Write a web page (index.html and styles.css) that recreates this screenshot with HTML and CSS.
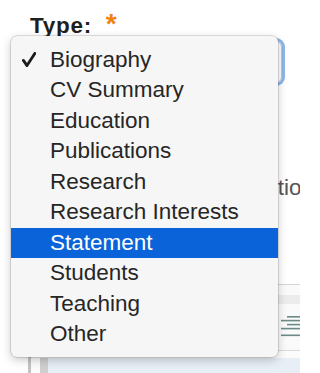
FILE: index.html
```html
<!DOCTYPE html>
<html>
<head>
<meta charset="utf-8">
<link rel="stylesheet" href="styles.css">
</head>
<body>
<div class="page">
  <div class="label">Type: <span class="req">*</span></div>
  <div class="select"></div>
  <div class="help"><span class="help-text">tion</span></div>
  <div class="editor">
    <div class="toolbar-band"></div>
    <div class="icon-row">
      <svg class="justify" width="22" height="22" viewBox="0 0 22 22">
        <rect x="7" y="1" width="15" height="1.6" fill="#6b8a88"/>
        <rect x="1" y="4.8" width="21" height="1.6" fill="#6b8a88"/>
        <rect x="7" y="8.8" width="15" height="1.6" fill="#6b8a88"/>
        <rect x="1" y="12.8" width="21" height="1.6" fill="#6b8a88"/>
        <rect x="1" y="19.5" width="21" height="1.6" fill="#6b8a88"/>
      </svg>
    </div>
    <div class="editor-foot">
      <div class="foot-bar"></div>
      <div class="foot-fill"></div>
    </div>
  </div>

  <div class="menu">
    <div class="item"><span class="check"><svg width="14" height="15" viewBox="0 0 14 15"><path d="M1.4 8.4 L5 13.6 L12.8 1.4" fill="none" stroke="#1a1a1a" stroke-width="2.8" stroke-linejoin="round" stroke-linecap="round"/></svg></span>Biography</div>
    <div class="item"><span class="check"></span>CV Summary</div>
    <div class="item"><span class="check"></span>Education</div>
    <div class="item"><span class="check"></span>Publications</div>
    <div class="item"><span class="check"></span>Research</div>
    <div class="item"><span class="check"></span>Research Interests</div>
    <div class="item selected"><span class="check"></span>Statement</div>
    <div class="item"><span class="check"></span>Students</div>
    <div class="item"><span class="check"></span>Teaching</div>
    <div class="item"><span class="check"></span>Other</div>
  </div>
</div>
</body>
</html>
```

FILE: styles.css
```css
html, body {
  margin: 0;
  padding: 0;
  background: #ffffff;
  overflow: hidden;
}
body {
  width: 300px;
  height: 373px;
  font-family: "Liberation Sans", Arial, sans-serif;
}
.page {
  position: relative;
  width: 300px;
  height: 373px;
  overflow: hidden;
}
.label {
  padding: 11px 0 0 30px;
  height: 26px;
  font-weight: bold;
  font-size: 22.5px;
  letter-spacing: 0.7px;
  line-height: 26px;
  color: #1f1f1f;
}
.req {
  color: #f0820f;
  margin-left: 7px;
  font-size: 28px;
}
.select {
  margin: 4px 0 0 26px;
  width: 254px;
  height: 40px;
  border-radius: 6px;
  border: 1px solid #b8c8dc;
  box-shadow: 0 0 0 3px #8fb6ea;
}
.help {
  margin-top: 91px;
  width: 300px;
  overflow: hidden;
  display: flex;
  justify-content: flex-end;
  white-space: nowrap;
  font-size: 22.5px;
  line-height: 28px;
  color: #555555;
}
.help-text {
  flex: none;
  margin-right: -14px;
}
.editor {
  margin: 82px 0 0 28px;
  border-left: 3px solid #c4c4c4;
  border-top: 1px solid #d6d6d6;
  height: 100px;
  background: #fafafa;
}
.toolbar-band {
  margin-top: 10px;
  height: 9px;
  background: #ececec;
}
.icon-row {
  display: flex;
  justify-content: flex-end;
  padding-top: 11px;
  height: 26px;
}
.justify {
  margin-right: -2px;
}
.editor-foot {
  border-top: 1px solid #dcdcdc;
  margin-top: 9px;
  height: 40px;
  display: flex;
  padding-top: 7px;
  background: #fbfbfb;
}
.foot-bar {
  margin-left: 9px;
  width: 8px;
  background: #cfcfcf;
  flex: none;
}
.foot-fill {
  flex: 1;
  background: #e8eef6;
}
.menu {
  position: absolute;
  left: 11px;
  top: 36px;
  width: 267px;
  padding: 8.5px 0 7px;
  background: #f6f6f6;
  border-radius: 6px;
  box-shadow: 0 0 0 0.5px rgba(0,0,0,0.22), 0 3px 10px rgba(0,0,0,0.22);
}
.item {
  display: flex;
  align-items: center;
  height: 30.5px;
  padding-left: 11px;
  font-size: 22.5px;
  color: #262626;
  white-space: nowrap;
}
.check {
  width: 28px;
  flex: none;
  display: flex;
  align-items: center;
}
.item.selected {
  background: #0a63d9;
  color: #ffffff;
}
```
